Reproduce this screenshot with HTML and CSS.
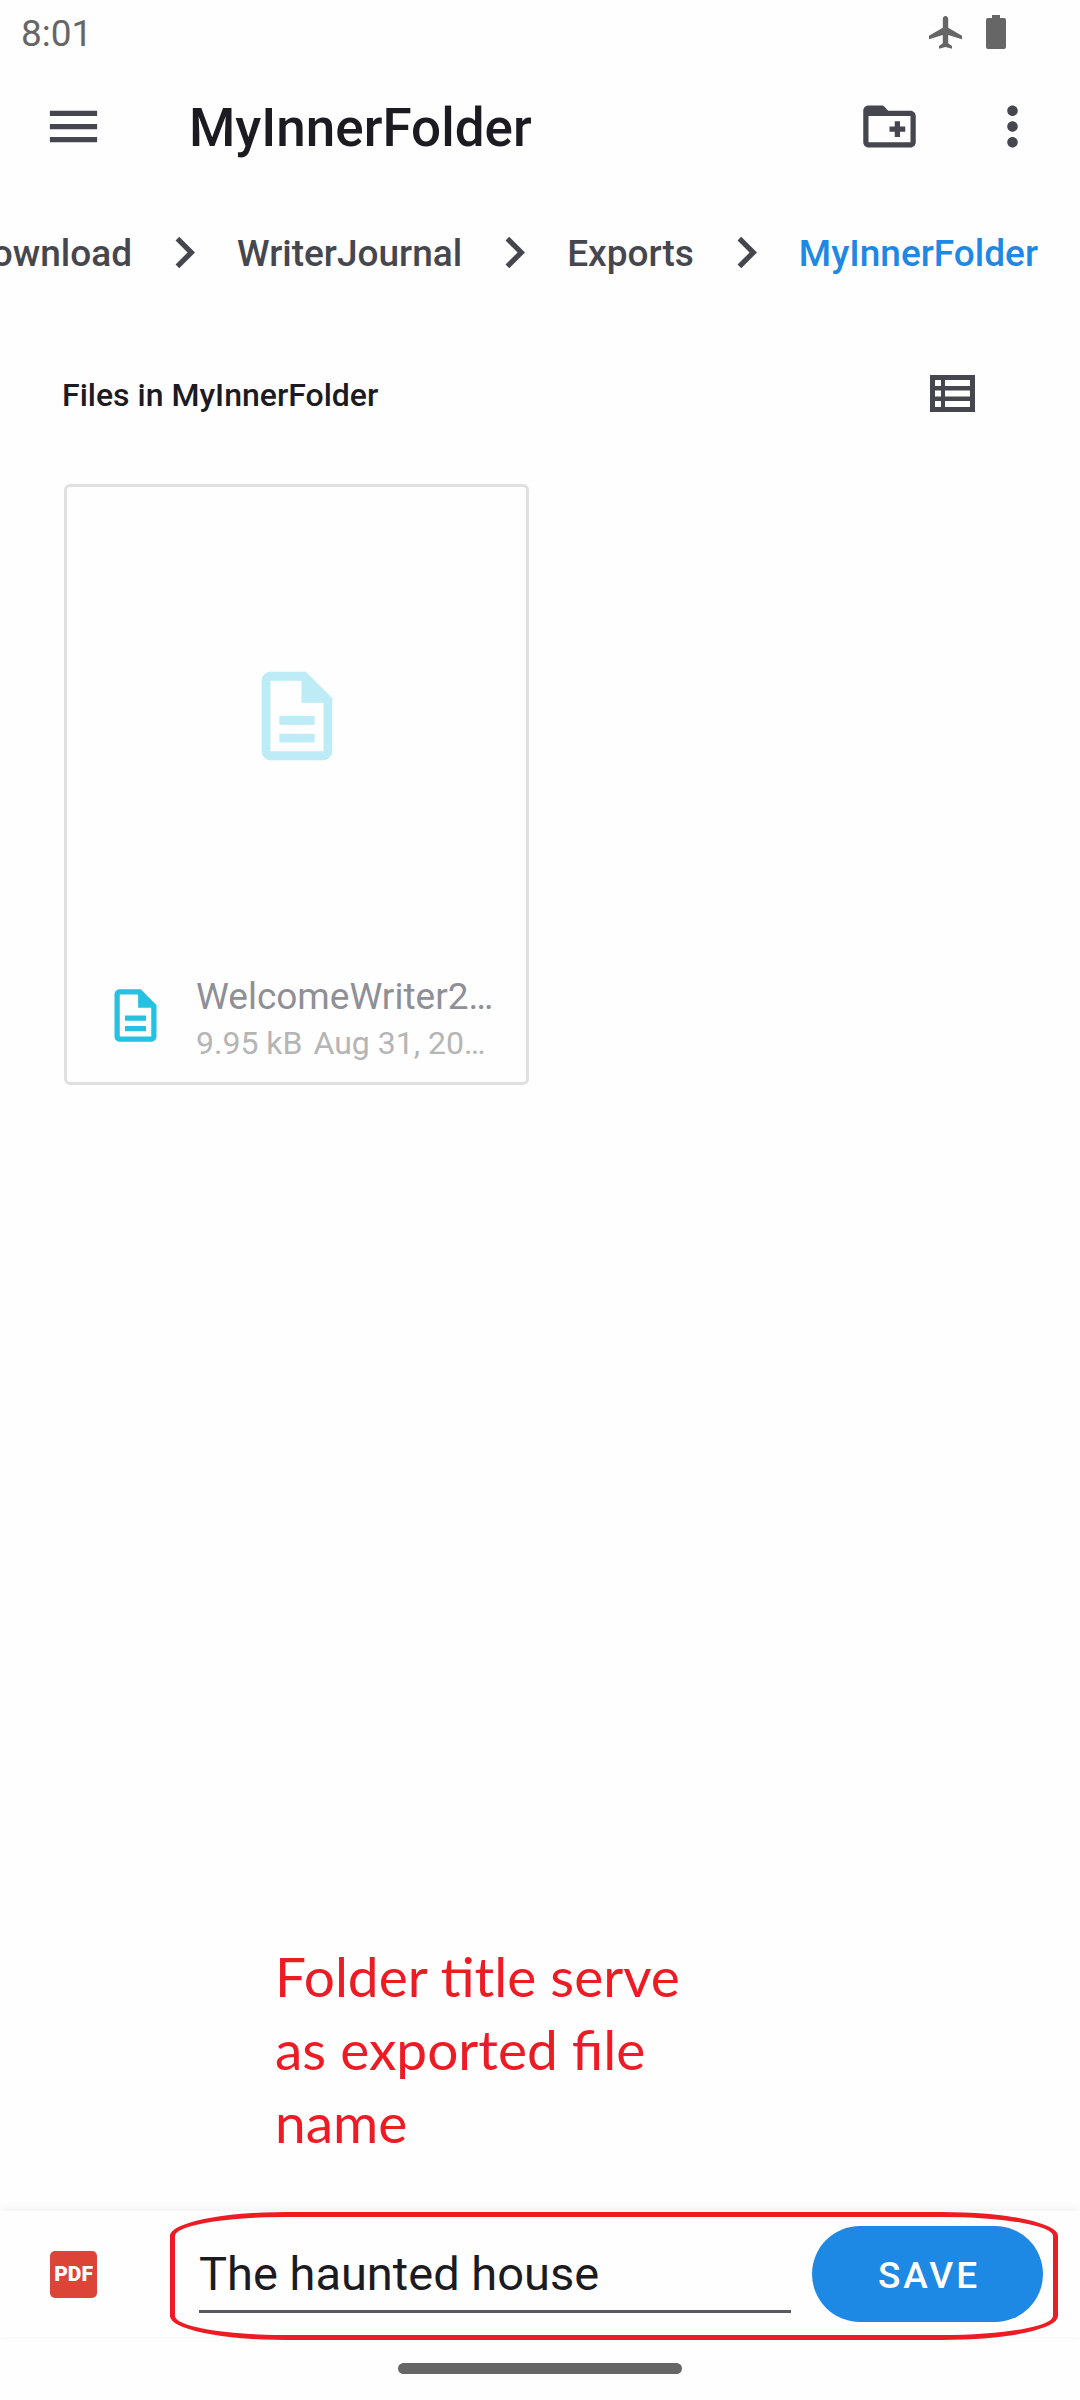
FILE: index.html
```html
<!DOCTYPE html>
<html lang="en">
<head>
<meta charset="utf-8">
<meta name="viewport" content="width=device-width, initial-scale=1">
<title>MyInnerFolder</title>
<link rel="stylesheet" href="styles.css">
</head>
<body>
<div class="status">
  <span class="clock">8:01</span>
  <svg class="plane" viewBox="0 0 33 34" aria-hidden="true"><path d="M16.500 1C18.200 1 19.200 2.400 19.200 4.200V12.800L33 20.800V24.200L19.200 20V28.300L23 31V33.800L16.500 32L10 33.800V31L13.800 28.300V20L0 24.200V20.800L13.800 12.800V4.200C13.800 2.400 14.800 1 16.500 1Z"/></svg>
  <svg class="battery" viewBox="0 0 20 34" aria-hidden="true"><path d="M6 0h8v3h4q2 0 2 2v27q0 2-2 2H2q-2 0-2-2V5q0-2 2-2h4z"/></svg>
</div>
<header class="appbar">
  <button class="icon-btn" aria-label="Menu"><svg viewBox="0 0 24 24"><path d="M3 18h18v-2H3v2zm0-5h18v-2H3v2zm0-7v2h18V6H3z"/></svg></button>
  <h1>MyInnerFolder</h1>
  <button class="icon-btn" aria-label="New folder"><svg viewBox="0 0 24 24"><path d="M20 6h-8.500l-1.400-1.500C9.800 4.200 9.500 4 9 4H4c-1.100 0-2 .9-2 2v12c0 1.100.9 2 2 2h16c1.100 0 2-.9 2-2V8c0-1.100-.9-2-2-2zm0 12H4V8h16v10zm-8-4h2v2h2v-2h2v-2h-2v-2h-2v2h-2z"/></svg></button>
  <button class="icon-btn" aria-label="More options"><svg viewBox="0 0 24 24"><path d="M12 8c1.100 0 2-.9 2-2s-.9-2-2-2-2 .9-2 2 .9 2 2 2zm0 2c-1.100 0-2 .9-2 2s.9 2 2 2 2-.9 2-2-.9-2-2-2zm0 6c-1.100 0-2 .9-2 2s.9 2 2 2 2-.9 2-2-.9-2-2-2z"/></svg></button>
</header>
<nav class="crumbs" aria-label="Path">
  <a href="#">Download</a>
  <svg viewBox="0 0 24 24" aria-hidden="true"><path d="M10 6L8.590 7.410 13.170 12l-4.580 4.590L10 18l6-6z"/></svg>
  <a href="#">WriterJournal</a>
  <svg viewBox="0 0 24 24" aria-hidden="true"><path d="M10 6L8.590 7.410 13.170 12l-4.580 4.590L10 18l6-6z"/></svg>
  <a href="#">Exports</a>
  <svg viewBox="0 0 24 24" aria-hidden="true"><path d="M10 6L8.590 7.410 13.170 12l-4.580 4.590L10 18l6-6z"/></svg>
  <a href="#" class="current" aria-current="page">MyInnerFolder</a>
</nav>
<main>
  <div class="section">
    <h2>Files in MyInnerFolder</h2>
    <button class="view-btn" aria-label="List view"><svg viewBox="0 0 45 37"><path fill-rule="evenodd" d="M0 0h45v37H0zM5 5v6h6V5zM15 5v6h25V5zM5 15.500v6h6v-6zM15 15.500v6h25v-6zM5 26v6h6v-6zM15 26v6h25v-6z"/></svg></button>
  </div>
  <div class="grid">
    <article class="card">
      <div class="preview"><svg viewBox="0 0 24 24" aria-hidden="true"><path d="M8 16h8v2H8zm0-4h8v2H8zm6-10H6c-1.100 0-2 .9-2 2v16c0 1.100.9 2 2 2h12c1.100 0 2-.9 2-2V8l-6-6zm4 18H6V4h7v5h5v11z"/></svg></div>
      <div class="info">
        <svg viewBox="0 0 24 24" aria-hidden="true"><path d="M8 16h8v2H8zm0-4h8v2H8zm6-10H6c-1.100 0-2 .9-2 2v16c0 1.100.9 2 2 2h12c1.100 0 2-.9 2-2V8l-6-6zm4 18H6V4h7v5h5v11z"/></svg>
        <div class="text">
          <div class="name">WelcomeWriter2…</div>
          <div class="meta"><span>9.95 kB</span><span>Aug 31, 20…</span></div>
        </div>
      </div>
    </article>
  </div>
  <p class="note">Folder title serve as exported file name</p>
</main>
<form class="savebar">
  <span class="pdf">PDF</span>
  <input type="text" value="The haunted house" aria-label="File name">
  <button type="button" class="save">SAVE</button>
  <span class="ring"></span>
</form>
<div class="gesture"><span></span></div>
</body>
</html>
```

FILE: styles.css
```css
* {
  box-sizing: border-box;
}

body {
  margin: 0;
  min-height: 100vh;
  display: flex;
  flex-direction: column;
  background: #fefefe;
  color: #1b1b21;
  font-family: Roboto, sans-serif;
  overflow-x: hidden;
}

button {
  border: 0;
  padding: 0;
  background: none;
  font-family: inherit;
}

h1,
h2,
p {
  margin: 0;
}

svg {
  display: block;
  flex: none;
  fill: currentColor;
}

.status {
  height: 63px;
  padding: 0 74px 0 21px;
  display: flex;
  align-items: center;
  color: #666;
  font-size: 37px;
}

.clock {
  flex: 1;
  padding-top: 4px;
}

.plane {
  width: 33px;
  height: 34px;
  margin-right: 24px;
}

.battery {
  width: 20px;
  height: 34px;
}

.appbar {
  height: 126px;
  padding: 0 36px 0 42px;
  display: flex;
  align-items: center;
  gap: 60px;
}

.icon-btn {
  color: #46464f;
}

.icon-btn svg {
  width: 63px;
  height: 63px;
}

h1 {
  flex: 1;
  margin-left: 24px;
  padding-top: 4px;
  font-size: 53px;
  font-weight: 500;
  white-space: nowrap;
}

.crumbs {
  height: 126px;
  padding-right: 42px;
  display: flex;
  align-items: center;
  justify-content: flex-end;
  gap: 21px;
  overflow: hidden;
  color: #46464f;
  font-size: 37px;
  font-weight: 500;
}

.crumbs svg {
  width: 63px;
  height: 63px;
}

.crumbs a {
  padding-top: 2px;
  color: inherit;
  text-decoration: none;
  white-space: nowrap;
}

.crumbs .current {
  color: #1e88e5;
}

main {
  flex: 1;
  position: relative;
  padding: 0 64px;
}

.section {
  height: 157px;
  margin-left: -2px;
  padding-right: 41px;
  display: flex;
  align-items: center;
  justify-content: space-between;
}

h2 {
  padding-top: 2px;
  font-size: 32px;
  font-weight: 500;
}

.view-btn {
  color: #46464f;
}

.view-btn svg {
  width: 45px;
  height: 37px;
}

.grid {
  padding-top: 12px;
  display: grid;
  grid-template-columns: 1fr 1fr;
  gap: 22px;
}

.card {
  border: 3px solid #e0e0e0;
  border-radius: 6px;
}

.preview {
  height: 458px;
  display: flex;
  align-items: center;
  justify-content: center;
  color: #bdecf6;
}

.preview svg {
  width: 106px;
  height: 106px;
}

.info {
  height: 137px;
  padding: 4px 20px 0 37px;
  display: flex;
  align-items: center;
  gap: 29px;
}

.info svg {
  width: 63px;
  height: 63px;
  color: #24c1e0;
}

.text {
  padding-top: 6px;
}

.name,
.meta {
  white-space: nowrap;
}

.name {
  color: #8f8f96;
  font-size: 37px;
  line-height: 48px;
}

.meta {
  display: flex;
  gap: 11px;
  color: #b5b5b5;
  font-size: 32px;
  line-height: 44px;
}

.note {
  position: absolute;
  left: 275px;
  bottom: 52px;
  width: 440px;
  color: #ed1c24;
  font-family: Lato, sans-serif;
  font-size: 55px;
  line-height: 73px;
}

.savebar {
  position: relative;
  height: 126px;
  padding: 0 37px 0 50px;
  display: flex;
  align-items: center;
  box-shadow: 0 -2px 10px rgba(0, 0, 0, 0.06);
  clip-path: inset(-12px 0 -12px 0);
}

.pdf {
  width: 47px;
  height: 47px;
  border-radius: 5px;
  background: #db4437;
  color: #fff;
  font-size: 21px;
  font-weight: 900;
  line-height: 47px;
  text-align: center;
}

.savebar input {
  flex: 1;
  min-width: 0;
  height: 78px;
  margin: 0 21px 0 102px;
  padding: 2px 0 0;
  border: 0;
  border-bottom: 3px solid #5a5862;
  border-radius: 0;
  background: none;
  color: #1b1b21;
  font-family: inherit;
  font-size: 47px;
}

.save {
  width: 231px;
  height: 96px;
  padding: 2px 0 0 3px;
  border-radius: 48px;
  background: #1e88e5;
  color: #fff;
  font-size: 37px;
  font-weight: 500;
  letter-spacing: 3px;
}

.ring {
  position: absolute;
  top: 1px;
  bottom: -3px;
  left: 170px;
  right: 22px;
  border: 5px solid #ed1c24;
  border-radius: 116px / 24px;
  pointer-events: none;
}

.gesture {
  height: 63px;
  display: flex;
  align-items: center;
  justify-content: center;
  background: #fefefe;
}

.gesture span {
  width: 284px;
  height: 11px;
  border-radius: 6px;
  background: #666;
}
```
